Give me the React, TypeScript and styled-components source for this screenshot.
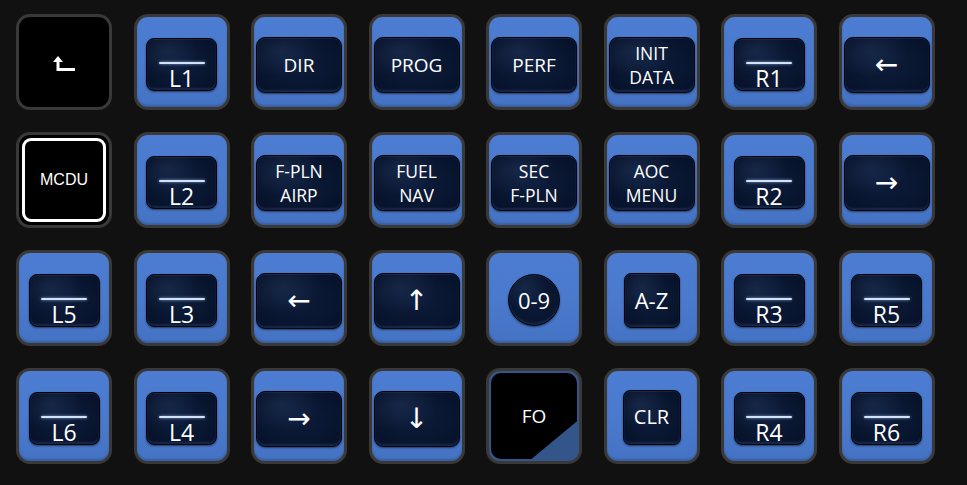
import React from "react";
import styled, { createGlobalStyle, css } from "styled-components";

const Global = createGlobalStyle`
  html, body { margin: 0; padding: 0; background: #111111; }
  body { width: 967px; height: 485px; overflow: hidden; font-family: "Open Sans", "Noto Sans", sans-serif; }
`;

const Deck = styled.div`
  display: grid;
  grid-template-columns: repeat(8, 96px);
  grid-auto-rows: 96px;
  column-gap: 21.5px;
  row-gap: 22px;
  padding: 14px 0 0 16px;
`;

type Variant = "blue" | "black" | "fo";

const Key = styled.div<{ $variant: Variant }>`
  box-sizing: border-box;
  width: 96px;
  height: 96px;
  border: 3px solid #3a3937;
  border-radius: 14px;
  display: flex;
  align-items: center;
  justify-content: center;
  position: relative;
  overflow: hidden;
  ${(p) =>
    p.$variant === "blue" &&
    css`
      background: linear-gradient(180deg, #4c7dd2 0%, #4a79cc 60%, #4473c4 100%);
      box-shadow: inset 0 -2px 2px rgba(0, 0, 0, 0.18);
    `}
  ${(p) =>
    p.$variant === "black" &&
    css`
      background: #000;
    `}
  ${(p) =>
    p.$variant === "fo" &&
    css`
      background: #34558a;
    `}
`;

type CapShape = "wide" | "small" | "square" | "clr" | "round";

const capSize: Record<CapShape, { w: number; h: number; r: string; mt: number; fs: number }> = {
  wide: { w: 86, h: 56, r: "9px", mt: 5, fs: 19 },
  small: { w: 71, h: 53, r: "8px", mt: 4, fs: 19 },
  square: { w: 56, h: 55, r: "7px", mt: 4, fs: 22 },
  clr: { w: 58, h: 55, r: "7px", mt: 2, fs: 20 },
  round: { w: 52, h: 52, r: "50%", mt: 4, fs: 22 },
};

const Cap = styled.div<{ $shape: CapShape }>`
  box-sizing: border-box;
  width: ${(p) => capSize[p.$shape].w}px;
  height: ${(p) => capSize[p.$shape].h}px;
  margin-top: ${(p) => capSize[p.$shape].mt}px;
  border-radius: ${(p) => capSize[p.$shape].r};
  border: 1px solid #01040b;
  background:
    radial-gradient(ellipse at 30% 25%, rgba(80, 110, 160, 0.18) 0%, rgba(80, 110, 160, 0) 45%),
    radial-gradient(ellipse at 50% 50%, #0c1b3a 0%, #091630 60%, #06102a 100%);
  box-shadow:
    inset 0 1px 0 rgba(120, 150, 200, 0.12),
    inset 0 -2px 2px rgba(110, 140, 190, 0.18),
    0 1px 2px rgba(0, 0, 0, 0.5);
  display: flex;
  flex-direction: column;
  align-items: center;
  justify-content: center;
  color: #ffffff;
  font-family: "Open Sans", "Noto Sans", sans-serif;
  font-size: ${(p) => capSize[p.$shape].fs}px;
  line-height: 26px;
  text-align: center;
`;

const CapLine = styled.div<{ $multi: boolean }>`
  ${(p) =>
    p.$multi &&
    css`
      font-size: 17.5px;
      line-height: 24px;
    `}
`;

const LineCap = styled(Cap)`
  justify-content: flex-start;
  padding-top: 23px;
`;

const LineMark = styled.div`
  width: 46px;
  height: 3px;
  border-radius: 2px;
  background: #d2e3f8;
  box-shadow: 0 0 3px rgba(170, 205, 255, 0.8);
`;

const LineLabel = styled.div`
  margin-top: 3px;
  font-size: 23px;
  line-height: 23px;
`;

const ArrowGlyph = styled.span`
  font-family: "DejaVu Sans", sans-serif;
  font-size: 28px;
  line-height: 28px;
`;

const Plain = styled.div<{ $size?: number; $font?: string }>`
  color: #ffffff;
  font-family: ${(p) => p.$font ?? '"Open Sans", "Noto Sans", sans-serif'};
  font-size: ${(p) => p.$size ?? 18}px;
  position: relative;
  z-index: 1;
`;

const McduFrame = styled.div`
  box-sizing: border-box;
  width: 84px;
  height: 84px;
  border: 3px solid #ffffff;
  border-radius: 9px;
  display: flex;
  align-items: center;
  justify-content: center;
`;

const FoPlate = styled.div`
  position: absolute;
  inset: 2px;
  background: #000;
  border-radius: 10px;
  clip-path: polygon(0 0, 100% 0, 100% 56%, 47% 100%, 0 100%);
`;

const BackIcon = () => (
  <svg width="26" height="22" viewBox="0 0 26 22" style={{ marginTop: 2, marginLeft: 2 }}>
    <path d="M6 4 L1 10 L11 10 Z" fill="#fff" />
    <path d="M6 9 V17.5 H23" stroke="#fff" strokeWidth="3" fill="none" />
  </svg>
);

type KeyDef =
  | { kind: "back" }
  | { kind: "mcdu" }
  | { kind: "fo" }
  | { kind: "line"; label: string }
  | { kind: "text"; lines: string[]; shape?: CapShape }
  | { kind: "arrow"; glyph: string };

const keys: KeyDef[] = [
  { kind: "back" },
  { kind: "line", label: "L1" },
  { kind: "text", lines: ["DIR"] },
  { kind: "text", lines: ["PROG"] },
  { kind: "text", lines: ["PERF"] },
  { kind: "text", lines: ["INIT", "DATA"] },
  { kind: "line", label: "R1" },
  { kind: "arrow", glyph: "←" },

  { kind: "mcdu" },
  { kind: "line", label: "L2" },
  { kind: "text", lines: ["F-PLN", "AIRP"] },
  { kind: "text", lines: ["FUEL", "NAV"] },
  { kind: "text", lines: ["SEC", "F-PLN"] },
  { kind: "text", lines: ["AOC", "MENU"] },
  { kind: "line", label: "R2" },
  { kind: "arrow", glyph: "→" },

  { kind: "line", label: "L5" },
  { kind: "line", label: "L3" },
  { kind: "arrow", glyph: "←" },
  { kind: "arrow", glyph: "↑" },
  { kind: "text", lines: ["0-9"], shape: "round" },
  { kind: "text", lines: ["A-Z"], shape: "square" },
  { kind: "line", label: "R3" },
  { kind: "line", label: "R5" },

  { kind: "line", label: "L6" },
  { kind: "line", label: "L4" },
  { kind: "arrow", glyph: "→" },
  { kind: "arrow", glyph: "↓" },
  { kind: "fo" },
  { kind: "text", lines: ["CLR"], shape: "clr" },
  { kind: "line", label: "R4" },
  { kind: "line", label: "R6" },
];

const renderKey = (k: KeyDef, i: number) => {
  switch (k.kind) {
    case "back":
      return (
        <Key key={i} $variant="black">
          <BackIcon />
        </Key>
      );
    case "mcdu":
      return (
        <Key key={i} $variant="black">
          <McduFrame>
            <Plain $size={16} $font='"Liberation Sans", Arial, sans-serif'>MCDU</Plain>
          </McduFrame>
        </Key>
      );
    case "fo":
      return (
        <Key key={i} $variant="fo">
          <FoPlate />
          <Plain $size={19}>FO</Plain>
        </Key>
      );
    case "line":
      return (
        <Key key={i} $variant="blue">
          <LineCap $shape="small">
            <LineMark />
            <LineLabel>{k.label}</LineLabel>
          </LineCap>
        </Key>
      );
    case "arrow":
      return (
        <Key key={i} $variant="blue">
          <Cap $shape="wide">
            <ArrowGlyph>{k.glyph}</ArrowGlyph>
          </Cap>
        </Key>
      );
    case "text":
      return (
        <Key key={i} $variant="blue">
          <Cap $shape={k.shape ?? "wide"}>
            {k.lines.map((l) => (
              <CapLine key={l} $multi={k.lines.length > 1}>
                {l}
              </CapLine>
            ))}
          </Cap>
        </Key>
      );
  }
};

export default function App() {
  return (
    <>
      <Global />
      <Deck>{keys.map(renderKey)}</Deck>
    </>
  );
}
